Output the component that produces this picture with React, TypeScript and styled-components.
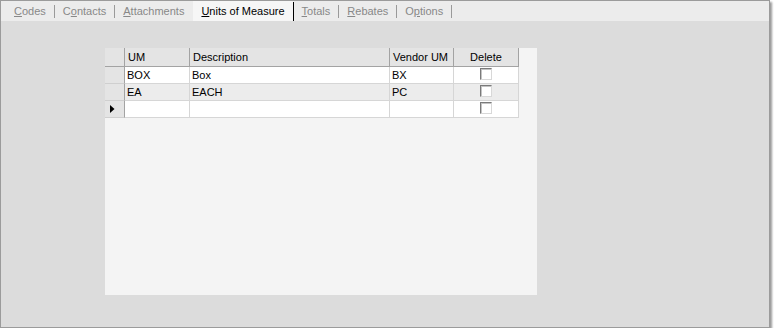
import React from 'react';
import styled, { createGlobalStyle } from 'styled-components';

const GlobalStyle = createGlobalStyle`
  body {
    margin: 0;
    background: #ffffff;
    font-family: "Liberation Sans", Arial, sans-serif;
    font-size: 11px;
  }
`;

const tabs = [
  { label: 'Codes', key: 0 },
  { label: 'Contacts', key: 1 },
  { label: 'Attachments', key: 0 },
  { label: 'Units of Measure', key: 0 },
  { label: 'Totals', key: 0 },
  { label: 'Rebates', key: 0 },
  { label: 'Options', key: 1 },
];
const activeTab = 'Units of Measure';

const rows = [
  { um: 'BOX', description: 'Box', vendorUm: 'BX' },
  { um: 'EA', description: 'EACH', vendorUm: 'PC' },
];

export default function App() {
  return (
    <>
      <GlobalStyle />
      <Frame>
        <TabBar>
          {tabs.map((tab, i) => {
            const active = tab.label === activeTab;
            const nextActive = tabs[i + 1]?.label === activeTab;
            return (
              <React.Fragment key={tab.label}>
                <Tab active={active} wide={nextActive}>
                  {tab.label.slice(0, tab.key)}
                  <u>{tab.label[tab.key]}</u>
                  {tab.label.slice(tab.key + 1)}
                </Tab>
                {!nextActive && <Sep active={active} />}
              </React.Fragment>
            );
          })}
        </TabBar>
        <Content>
          <Panel>
            <Grid>
              <colgroup>
                <col style={{ width: 20 }} />
                <col style={{ width: 65 }} />
                <col style={{ width: 200 }} />
                <col style={{ width: 64 }} />
                <col style={{ width: 65 }} />
              </colgroup>
              <thead>
                <HeadRow>
                  <Corner />
                  <HeadCell>UM</HeadCell>
                  <HeadCell>Description</HeadCell>
                  <HeadCell>Vendor UM</HeadCell>
                  <HeadCell center>Delete</HeadCell>
                </HeadRow>
              </thead>
              <tbody>
                {rows.map((r, i) => (
                  <DataRow key={r.um} alt={i % 2 === 1}>
                    <RowHead />
                    <Cell>{r.um}</Cell>
                    <Cell>{r.description}</Cell>
                    <Cell>{r.vendorUm}</Cell>
                    <Cell center>
                      <Check />
                    </Cell>
                  </DataRow>
                ))}
                <DataRow alt={false}>
                  <RowHead>
                    <svg width="5" height="8" viewBox="0 0 5 8" style={{ display: 'block', marginLeft: 5 }}>
                      <path d="M0 0 L4.5 4 L0 8 Z" fill="#000" />
                    </svg>
                  </RowHead>
                  <Cell />
                  <Cell />
                  <Cell />
                  <Cell center>
                    <Check />
                  </Cell>
                </DataRow>
              </tbody>
            </Grid>
          </Panel>
        </Content>
      </Frame>
    </>
  );
}

const Frame = styled.div`
  box-sizing: border-box;
  width: 770px;
  height: 328px;
  border: 1px solid #9b9b9b;
  box-shadow: 2px 2px 2px rgba(0, 0, 0, 0.4);
  background: #dcdcdc;
  display: flex;
  flex-direction: column;
`;

const TabBar = styled.div`
  height: 20px;
  background: #ececec;
  display: flex;
  align-items: flex-start;
  padding-left: 5px;
`;

const Tab = styled.div<{ active: boolean; wide: boolean }>`
  height: 20px;
  line-height: 20px;
  padding: 0 ${({ wide }) => (wide ? 9 : 8)}px 0 8px;
  color: ${({ active }) => (active ? '#000000' : '#888888')};
  background: ${({ active }) => (active ? '#f6f6f6' : 'transparent')};
  white-space: nowrap;
`;

const Sep = styled.div<{ active: boolean }>`
  width: 1px;
  height: ${({ active }) => (active ? 19 : 13)}px;
  margin-top: ${({ active }) => (active ? 1 : 4)}px;
  background: ${({ active }) => (active ? '#000000' : '#9a9a9a')};
`;

const Content = styled.div`
  flex: 1;
  padding: 27px 0 0 104px;
`;

const Panel = styled.div`
  width: 432px;
  height: 247px;
  background: #f4f4f4;
`;

const Grid = styled.table`
  border-collapse: separate;
  border-spacing: 0;
  table-layout: fixed;
  width: 414px;
  font-size: 11px;
  color: #000;
`;

const HeadRow = styled.tr`
  height: 19px;
`;

const Corner = styled.th`
  padding: 0;
  background: #e4e4e4;
  border-right: 1px solid #a3a3a3;
  border-bottom: 1px solid #a3a3a3;
`;

const HeadCell = styled.th<{ center?: boolean }>`
  padding: 0 3px;
  font-weight: normal;
  text-align: ${({ center }) => (center ? 'center' : 'left')};
  background: #e4e4e4;
  border-right: 1px solid #a3a3a3;
  border-bottom: 1px solid #a3a3a3;
  white-space: nowrap;
  overflow: hidden;
`;

const DataRow = styled.tr<{ alt: boolean }>`
  height: 17px;
  background: ${({ alt }) => (alt ? '#ececec' : '#ffffff')};
`;

const RowHead = styled.td`
  padding: 0;
  background: #e4e4e4;
  border-right: 1px solid #a3a3a3;
  border-bottom: 1px solid #cfcfcf;
`;

const Cell = styled.td<{ center?: boolean }>`
  padding: 0 2px;
  line-height: 16px;
  text-align: ${({ center }) => (center ? 'center' : 'left')};
  border-right: 1px solid #d6d6d6;
  border-bottom: 1px solid #d6d6d6;
  white-space: nowrap;
  overflow: hidden;
`;

const Check = styled.span`
  display: inline-block;
  box-sizing: border-box;
  width: 12px;
  height: 12px;
  margin-top: 1px;
  vertical-align: top;
  background: #ffffff;
  border: 1px solid;
  border-color: #7a7a7a #d8d8d8 #d8d8d8 #7a7a7a;
  box-shadow: inset 1px 1px 0 #c4c4c4;
`;
